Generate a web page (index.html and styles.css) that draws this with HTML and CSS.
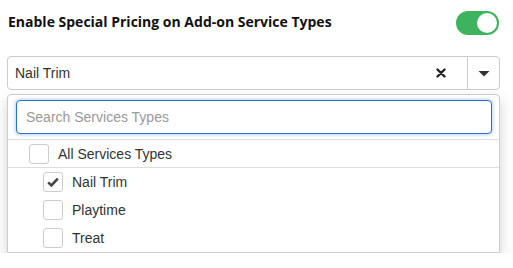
FILE: index.html
```html
<!DOCTYPE html>
<html lang="en">
<head>
    <meta charset="UTF-8">
    <title>Add-on Service Pricing</title>
    <link rel="stylesheet" href="styles.css">
</head>
<body>
    <div class="panel">
        <div class="setting-row">
            <h2 class="setting-title">Enable Special Pricing on Add-on Service Types</h2>
            <span class="toggle on"><span class="knob"></span></span>
        </div>

        <div class="select">
            <span class="select-value">Nail Trim</span>
            <span class="select-clear">
                <svg width="10" height="10" viewBox="0 0 10 10"><path d="M1.5 1.5 L8.5 8.5 M8.5 1.5 L1.5 8.5" stroke="#222" stroke-width="2.4" stroke-linecap="round"/></svg>
            </span>
            <span class="select-arrow">
                <svg width="12" height="6" viewBox="0 0 12 6"><path d="M0.5 0 H11.5 L6 5.5 Z" fill="#333"/></svg>
            </span>
        </div>

        <div class="dropdown">
            <div class="search-box">
                <input type="text" class="search" placeholder="Search Services Types">
            </div>
            <ul class="options">
                <li class="option all"><span class="check"></span>All Services Types</li>
                <li class="option child"><span class="check checked">
                    <svg width="12" height="10" viewBox="0 0 12 10"><path d="M1.2 5.4 L4.4 8.4 L10.8 1.6" fill="none" stroke="#444" stroke-width="2.6"/></svg>
                </span>Nail Trim</li>
                <li class="option child"><span class="check"></span>Playtime</li>
                <li class="option child"><span class="check"></span>Treat</li>
            </ul>
        </div>
    </div>
</body>
</html>
```

FILE: styles.css
```css
* {
    box-sizing: border-box;
    margin: 0;
    padding: 0;
}

body {
    font-family: "Liberation Sans", Arial, sans-serif;
    font-size: 14px;
    color: #333;
    background-color: #fff;
}

.panel {
    width: 493px;
    margin-left: 7px;
    padding-top: 11px;
}

.setting-row {
    display: flex;
    justify-content: space-between;
    align-items: center;
    padding-left: 1px;
    padding-right: 1px;
}

.setting-title {
    font-family: "Open Sans", sans-serif;
    font-size: 14px;
    font-weight: bold;
    color: #111;
    margin-top: -3px;
}

.toggle {
    display: block;
    width: 43px;
    height: 24px;
    border-radius: 12px;
    background-color: #3cb35c;
    position: relative;
}

.toggle .knob {
    position: absolute;
    top: 2px;
    right: 2px;
    width: 20px;
    height: 20px;
    border-radius: 50%;
    background-color: #fff;
}

.select {
    display: flex;
    align-items: center;
    height: 34px;
    margin-top: 21px;
    border: 1px solid #ccc;
    border-radius: 4px;
}

.select-value {
    flex: 1;
    padding-left: 7px;
    color: #333;
}

.select-clear {
    display: flex;
    align-items: center;
    justify-content: center;
    width: 26px;
    height: 100%;
    margin-right: 13px;
}

.select-arrow {
    display: flex;
    align-items: center;
    justify-content: center;
    width: 32px;
    height: 100%;
    border-left: 1px solid #ccc;
    padding-top: 2px;
}

.dropdown {
    margin-top: 4px;
    border: 1px solid #ccc;
    border-radius: 4px 4px 0 0;
    box-shadow: 0 6px 14px rgba(0, 0, 0, 0.18);
}

.search-box {
    padding: 5px 7px 5px 8px;
    border-bottom: 1px solid #ddd;
}

.search {
    display: block;
    width: 100%;
    height: 34px;
    padding: 0 9px;
    font-family: "Liberation Sans", Arial, sans-serif;
    font-size: 14px;
    color: #333;
    border: 1px solid #2a72c8;
    border-radius: 4px;
    box-shadow: 0 0 4px rgba(60, 130, 220, 0.55);
    outline: none;
}

.search::placeholder {
    color: #999;
}

.options {
    list-style: none;
}

.option {
    display: flex;
    align-items: center;
    height: 28px;
    color: #333;
}

.option.all {
    padding-left: 21px;
    border-bottom: 1px solid #ddd;
}

.option.child {
    padding-left: 35px;
}

.check {
    display: flex;
    align-items: center;
    justify-content: center;
    width: 20px;
    height: 20px;
    margin-right: 9px;
    border: 1px solid #ccc;
    border-radius: 3px;
    background-color: #fff;
}
```
